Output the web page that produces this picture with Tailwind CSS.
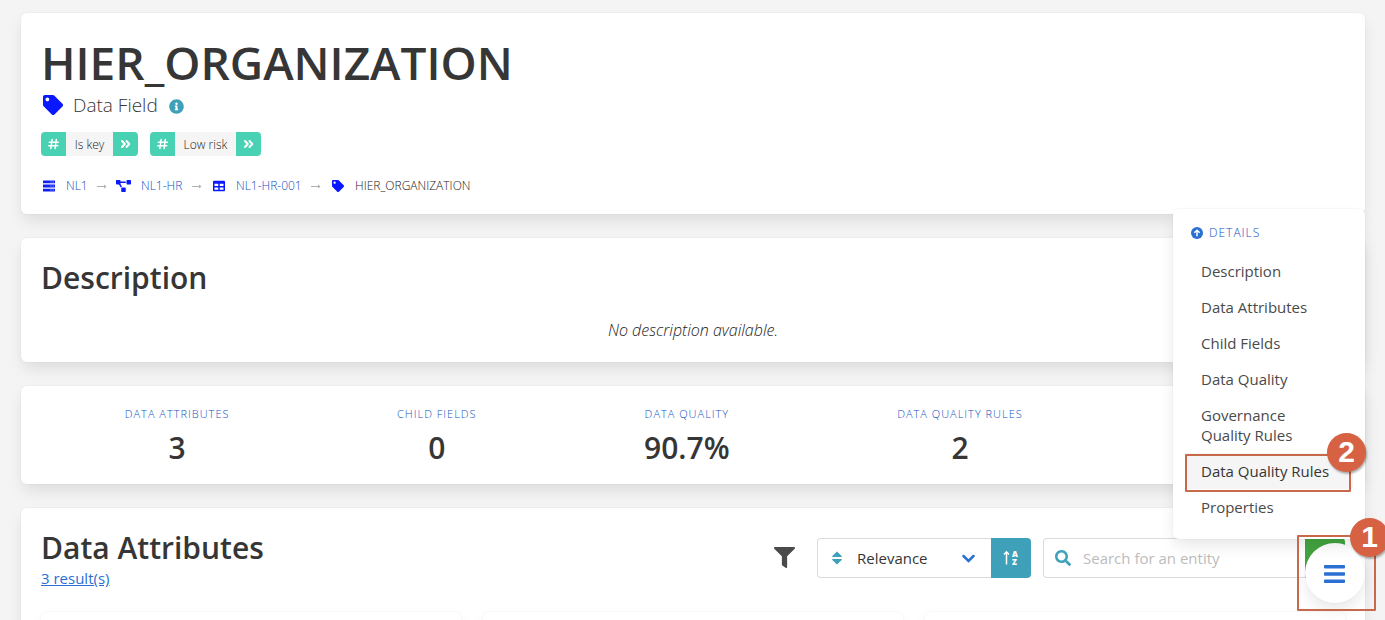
<!DOCTYPE html>
<html lang="en">
<head>
<meta charset="utf-8">
<title>HIER_ORGANIZATION</title>
<script src="https://cdn.jsdelivr.net/npm/@tailwindcss/browser@4"></script>
</head>
<body class="relative h-screen overflow-hidden bg-[#f4f4f4] font-['Open_Sans','Noto_Sans',sans-serif] text-[15px] text-[#4a4a4a]">
<svg class="hidden">
  <symbol id="tag" viewBox="0 0 512 512"><path d="M0 252.118V48C0 21.49 21.49 0 48 0h204.118a48 48 0 0 1 33.941 14.059l211.882 211.882c18.745 18.745 18.745 49.137 0 67.882L293.823 497.941c-18.745 18.745-49.137 18.745-67.882 0L14.059 286.059A48 48 0 0 1 0 252.118zM112 64c-26.51 0-48 21.49-48 48s21.49 48 48 48 48-21.49 48-48-21.49-48-48-48z"/></symbol>
  <symbol id="hash" viewBox="0 0 12 12"><path d="M4.100 1.500 2.900 10.500M8.300 1.500 7.100 10.500M1.300 4.200h9M.8 7.800h9" fill="none" stroke="currentColor" stroke-width="1.500" stroke-linecap="round"/></symbol>
  <symbol id="chevrons" viewBox="0 0 12 12"><path d="M2 3 4.800 6 2 9M6.500 3 9.300 6 6.500 9" fill="none" stroke="currentColor" stroke-width="2" stroke-linecap="round" stroke-linejoin="round"/></symbol>
  <symbol id="arrow" viewBox="0 0 10 6"><path d="M0 3.500h8" fill="none" stroke="#b0b0b0"/><path d="M7 1.500 9.500 3.500 7 5.500z" fill="#b0b0b0"/></symbol>
</svg>

<main class="flex flex-col gap-6 px-[21px] pt-[13px] pr-5">
  <section class="rounded-md bg-white p-5 shadow-[0_8px_16px_-2px_rgba(10,10,10,0.1),0_0_0_1px_rgba(10,10,10,0.02)]">
    <h1 class="pt-0.5 pb-0.5 text-[46px] leading-[54px] font-semibold text-[#363636]">HIER_ORGANIZATION</h1>
    <div class="flex h-7 items-center text-[19px] font-light">
      <svg class="ml-0.5 size-5 fill-[#0a18ff]"><use href="#tag"/></svg>
      <span class="ml-2.5 text-[#363636]">Data Field</span>
      <svg class="mt-0.5 ml-[11px] size-[15px] fill-[#3fa1b9]" viewBox="0 0 512 512"><path d="M256 8C119.043 8 8 119.083 8 256c0 136.997 111.043 248 248 248s248-111.003 248-248C504 119.083 392.957 8 256 8zm0 110c23.196 0 42 18.804 42 42s-18.804 42-42 42-42-18.804-42-42 18.804-42 42-42zm56 254c0 6.627-5.373 12-12 12h-88c-6.627 0-12-5.373-12-12v-24c0-6.627 5.373-12 12-12h12v-64h-12c-6.627 0-12-5.373-12-12v-24c0-6.627 5.373-12 12-12h64c6.627 0 12 5.373 12 12v100h12c6.627 0 12 5.373 12 12v24z"/></svg>
    </div>
    <div class="mt-[13px] flex gap-3 text-[12px] font-light">
      <div class="flex h-6 overflow-hidden rounded bg-[#f5f5f5]">
        <span class="flex w-[25px] items-center justify-center bg-[#48d1b3] text-white"><svg class="size-3"><use href="#hash"/></svg></span>
        <span class="w-[47px] text-center leading-[26px] text-[#222222]">Is key</span>
        <button class="flex w-[25px] items-center justify-center bg-[#48d1b3] text-white" aria-label="Is key"><svg class="size-3"><use href="#chevrons"/></svg></button>
      </div>
      <div class="flex h-6 overflow-hidden rounded bg-[#f5f5f5]">
        <span class="flex w-[25px] items-center justify-center bg-[#48d1b3] text-white"><svg class="size-3"><use href="#hash"/></svg></span>
        <span class="w-[61px] text-center leading-[26px] text-[#222222]">Low risk</span>
        <button class="flex w-[25px] items-center justify-center bg-[#48d1b3] text-white" aria-label="Low risk"><svg class="size-3"><use href="#chevrons"/></svg></button>
      </div>
    </div>
    <nav class="mt-[21px] flex h-[17px] items-center text-[12px] font-light text-[#0f52c0]">
      <svg class="ml-0.5 size-3 fill-[#1020f0]" viewBox="0 0 12 12"><path d="M.5.5h11a.5.5 0 0 1 .5.5v2.200H0V1a.5.5 0 0 1 .5-.5zM0 4.400h12v3.200H0zM0 8.800h12V11a.5.5 0 0 1-.5.5H.5A.5.5 0 0 1 0 11z"/><path d="M7.500 1.400h1v1h-1zM9.700 1.400h1v1h-1zM7.500 5.500h1v1h-1zM9.700 5.500h1v1h-1zM7.500 9.600h1v1h-1zM9.700 9.600h1v1h-1z" fill="#b9c0ff"/></svg>
      <a href="#" class="ml-[11px] w-[22px]">NL1</a>
      <svg class="mx-[9px] h-1.5 w-2.5"><use href="#arrow"/></svg>
      <svg class="h-3 w-[15px] fill-[#0a18ff]" viewBox="0 0 640 512"><path d="M384 320H256c-17.670 0-32 14.330-32 32v128c0 17.670 14.330 32 32 32h128c17.670 0 32-14.330 32-32V352c0-17.670-14.330-32-32-32zM192 32c0-17.670-14.330-32-32-32H32C14.330 0 0 14.330 0 32v128c0 17.670 14.330 32 32 32h95.720l73.160 128.040C211.980 300.980 232.400 288 256 288h.28L192 175.510V128h224V64H192V32zM608 0H480c-17.670 0-32 14.330-32 32v128c0 17.670 14.330 32 32 32h128c17.670 0 32-14.330 32-32V32c0-17.670-14.330-32-32-32z"/></svg>
      <a href="#" class="ml-[10px] w-[42px] whitespace-nowrap">NL1-HR</a>
      <svg class="mx-[9px] h-1.5 w-2.5"><use href="#arrow"/></svg>
      <svg class="ml-0.5 size-3 fill-[#0a18ff]" viewBox="0 0 512 512"><path d="M464 32H48C21.490 32 0 53.490 0 80v352c0 26.510 21.490 48 48 48h416c26.510 0 48-21.490 48-48V80c0-26.510-21.490-48-48-48zM224 416H64v-96h160v96zm0-160H64v-96h160v96zm224 160H288v-96h160v96zm0-160H288v-96h160v96z"/></svg>
      <a href="#" class="ml-[11px] w-[66px] whitespace-nowrap">NL1-HR-001</a>
      <svg class="mx-[9px] h-1.5 w-2.5"><use href="#arrow"/></svg>
      <svg class="ml-0.5 size-3 fill-[#0a18ff]"><use href="#tag"/></svg>
      <span class="ml-[11px] text-[#222222]">HIER_ORGANIZATION</span>
    </nav>
  </section>

  <section class="rounded-md bg-white p-5 shadow-[0_8px_16px_-2px_rgba(10,10,10,0.1),0_0_0_1px_rgba(10,10,10,0.02)]">
    <h2 class="text-[30px] leading-10 font-semibold text-[#363636]">Description</h2>
    <p class="mt-5 text-center text-[16px] leading-6 font-light text-[#222222] italic">No description available.</p>
  </section>

  <section class="flex rounded-md bg-white p-5 text-center shadow-[0_8px_16px_-2px_rgba(10,10,10,0.1),0_0_0_1px_rgba(10,10,10,0.02)]">
    <div class="grow"><p class="text-[11px] leading-4 font-light tracking-[1px] text-[#0f52c0]">DATA ATTRIBUTES</p><p class="mt-[7px] -mb-[3px] text-[30px] leading-[38px] font-semibold text-[#363636]">3</p></div>
    <div class="grow"><p class="text-[11px] leading-4 font-light tracking-[1px] text-[#0f52c0]">CHILD FIELDS</p><p class="mt-[7px] -mb-[3px] text-[30px] leading-[38px] font-semibold text-[#363636]">0</p></div>
    <div class="grow"><p class="text-[11px] leading-4 font-light tracking-[1px] text-[#0f52c0]">DATA QUALITY</p><p class="mt-[7px] -mb-[3px] text-[30px] leading-[38px] font-semibold text-[#363636]">90.7%</p></div>
    <div class="grow"><p class="text-[11px] leading-4 font-light tracking-[1px] text-[#0f52c0]">DATA QUALITY RULES</p><p class="mt-[7px] -mb-[3px] text-[30px] leading-[38px] font-semibold text-[#363636]">2</p></div>
    <div class="w-[71px] grow"></div>
  </section>

  <section class="rounded-md bg-white p-5 shadow-[0_8px_16px_-2px_rgba(10,10,10,0.1),0_0_0_1px_rgba(10,10,10,0.02)]">
    <div class="flex items-center justify-between">
      <div>
        <h2 class="text-[30px] leading-10 font-semibold text-[#363636]">Data Attributes</h2>
        <a href="#" class="block leading-5 text-[#2a6fd2] underline">3 result(s)</a>
      </div>
      <div class="flex items-center">
        <button aria-label="Filter" class="mr-[22px] pb-0.5"><svg class="block size-[21px] fill-[#4a4a4a]" viewBox="0 0 512 512"><path d="M487.976 0H24.028C2.710 0-8.047 25.866 7.058 40.971L192 225.941V432c0 7.831 3.821 15.170 10.237 19.662l80 55.980C298.020 518.690 320 507.493 320 487.980V225.941l184.947-184.970C520.021 25.896 509.338 0 487.976 0z"/></svg></button>
        <div class="relative">
          <select aria-label="Sort by" class="h-10 w-[174px] appearance-none rounded-l border border-r-0 border-[#dbdbdb] bg-white pl-[39px] text-[#363636]"><option>Relevance</option></select>
          <svg class="pointer-events-none absolute top-[13px] left-[15px] h-[14px] w-[10px] fill-[#3fa1b9]" viewBox="0 0 10 14"><path d="M5 .5 9.700 5c.4.5.2 1-.4 1H.7c-.6 0-.8-.5-.4-1zM5 13.500.3 9c-.4-.5-.2-1 .4-1h8.600c.6 0 .8.5.4 1z"/></svg>
          <svg class="pointer-events-none absolute top-4 right-4 h-[9px] w-[13px] fill-none stroke-[#2a6fd2]" viewBox="0 0 13 9"><path d="M1.500 2 6.500 7l5-5" stroke-width="2.500" stroke-linecap="round"/></svg>
        </div>
        <button aria-label="Sort ascending" class="flex size-10 items-center justify-center rounded-r bg-[#3fa1b9]">
          <svg class="size-4" viewBox="0 0 16 16"><path d="M3.500 14.500V2M1 4.500 3.500 1.800 6 4.500" fill="none" stroke="#fff" stroke-width="1.500"/><text x="9" y="6.500" fill="#fff" font-family="Open Sans" font-size="8" font-weight="800">A</text><text x="9" y="15" fill="#fff" font-family="Open Sans" font-size="8" font-weight="800">Z</text></svg>
        </button>
        <div class="relative ml-3">
          <input type="text" aria-label="Search" placeholder="Search for an entity" class="h-10 w-[262px] rounded-l border border-r-0 border-[#dbdbdb] pl-[39px] placeholder:text-[#bcbcbc]">
          <svg class="absolute top-3 left-3 size-4 fill-[#3fa1b9]" viewBox="0 0 512 512"><path d="M505 442.700L405.300 343c-4.500-4.500-10.600-7-17-7H372c27.600-35.300 44-79.700 44-128C416 93.100 322.900 0 208 0S0 93.100 0 208s93.100 208 208 208c48.300 0 92.700-16.400 128-44v16.300c0 6.400 2.500 12.500 7 17l99.700 99.700c9.400 9.400 24.600 9.400 33.900 0l28.300-28.300c9.400-9.400 9.400-24.600.1-34zM208 336c-70.700 0-128-57.200-128-128 0-70.700 57.200-128 128-128 70.700 0 128 57.200 128 128 0 70.700-57.200 128-128 128z"/></svg>
        </div>
        <button aria-label="Search entities" class="size-10 rounded-r bg-[#43a540]"></button>
      </div>
    </div>
    <div class="mt-6 grid grid-cols-3 gap-[22px]">
      <div class="h-24 rounded-md bg-white shadow-[0_8px_16px_-2px_rgba(10,10,10,0.1),0_0_0_1px_rgba(10,10,10,0.02)]"></div>
      <div class="h-24 rounded-md bg-white shadow-[0_8px_16px_-2px_rgba(10,10,10,0.1),0_0_0_1px_rgba(10,10,10,0.02)]"></div>
      <div class="h-24 rounded-md bg-white shadow-[0_8px_16px_-2px_rgba(10,10,10,0.1),0_0_0_1px_rgba(10,10,10,0.02)]"></div>
    </div>
  </section>
</main>

<button aria-label="Menu" class="absolute right-5 bottom-[17px] flex size-[60px] items-center justify-center rounded-full bg-white shadow-[0_8px_16px_-2px_rgba(10,10,10,0.1),0_0_0_1px_rgba(10,10,10,0.02)]">
  <svg class="h-[19px] w-[22px] fill-[#2a6fd2]" viewBox="0 0 22 19"><rect y="1" width="21" height="3.400" rx=".8"/><rect y="8.300" width="21" height="3.400" rx=".8"/><rect y="15.600" width="21" height="3.400" rx=".8"/></svg>
</button>
<aside class="absolute right-5 bottom-[81px] w-48 rounded-md bg-white px-3 pt-[13px] pb-[14px] shadow-[0_8px_16px_-2px_rgba(10,10,10,0.1),0_0_0_1px_rgba(10,10,10,0.02)]">
  <p class="flex h-[22px] items-center pl-1.5 text-[12px] font-light tracking-[1px] text-[#0f52c0]">
    <svg class="mr-1.5 size-3" viewBox="0 0 12 12"><circle cx="6" cy="6" r="6" fill="#2a6fd2"/><path d="M6 9.300V3.500M3.300 5.800 6 3.200l2.700 2.600" fill="none" stroke="#fff" stroke-width="1.500"/></svg>DETAILS
  </p>
  <ul class="mt-[9px] leading-5">
    <li><a href="#" class="block px-4 py-2">Description</a></li>
    <li><a href="#" class="block px-4 py-2">Data Attributes</a></li>
    <li><a href="#" class="block px-4 py-2">Child Fields</a></li>
    <li><a href="#" class="block px-4 py-2">Data Quality</a></li>
    <li><a href="#" class="block px-4 py-2">Governance<br>Quality Rules</a></li>
    <li><a href="#" class="block bg-[#f5f5f5] px-4 py-2 whitespace-nowrap text-[#363636]">Data Quality Rules</a></li>
    <li><a href="#" class="block px-4 py-2">Properties</a></li>
  </ul>
</aside>

<div class="absolute right-[34px] bottom-32 h-[38px] w-[166px] rounded-[1px] border-2 border-[#c9694c]"></div>
<div class="absolute right-[9px] bottom-[9px] h-[76px] w-[79px] rounded-[1px] border-2 border-[#c9694c]"></div>
<div class="absolute right-[19px] bottom-[148px] size-[39px] rounded-full bg-[#d66243] text-center font-['Liberation_Sans',Arial,sans-serif] text-[30px] leading-[38px] font-bold text-white shadow-[1px_2px_2px_rgba(0,0,0,0.3)]">2</div>
<div class="absolute -right-1 bottom-[63px] size-[39px] rounded-full bg-[#d66243] text-center font-['Liberation_Sans',Arial,sans-serif] text-[30px] leading-[38px] font-bold text-white shadow-[1px_2px_2px_rgba(0,0,0,0.3)]">1</div>
</body>
</html>
